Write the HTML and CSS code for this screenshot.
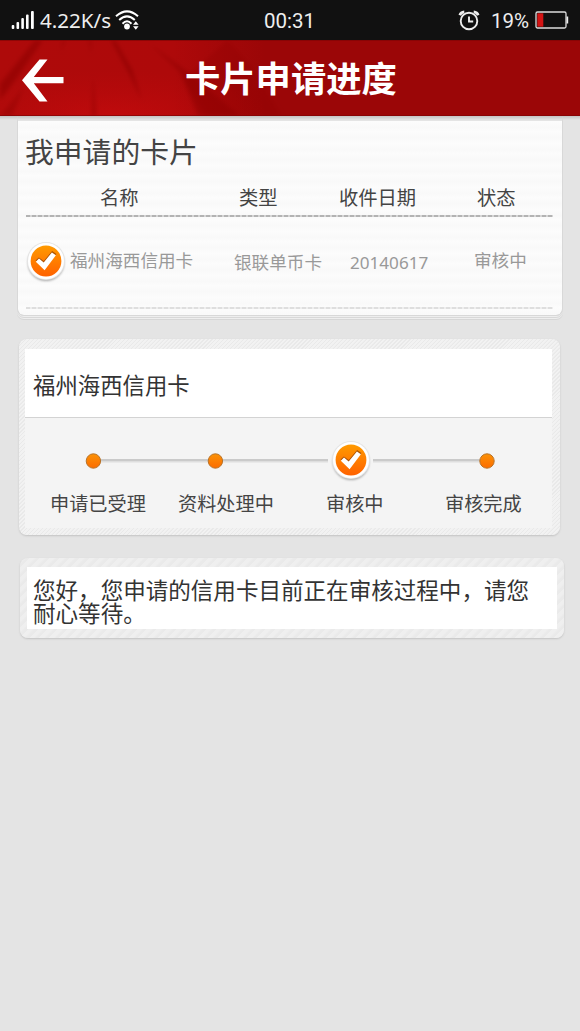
FILE: index.html
```html
<!DOCTYPE html>
<html lang="zh-CN">
<head>
<meta charset="utf-8">
<title>卡片申请进度</title>
<link rel="stylesheet" href="styles.css">
</head>
<body>
<svg class="defs" width="0" height="0" aria-hidden="true">
  <defs>
    <linearGradient id="orange" x1="0" y1="0" x2="0" y2="1"><stop offset="0" stop-color="#ff9a00"/><stop offset="1" stop-color="#ff6200"/></linearGradient>
    <linearGradient id="dot" x1="0" y1="0" x2="0" y2="1"><stop offset="0" stop-color="#fb9206"/><stop offset="1" stop-color="#fc6c00"/></linearGradient>
    <filter id="soft" x="-20%" y="-20%" width="140%" height="140%"><feGaussianBlur stdDeviation="1"/></filter>
    <filter id="fold" x="-40%" y="-20%" width="180%" height="140%"><feGaussianBlur stdDeviation="2"/></filter>
    <symbol id="check" viewBox="0 0 44 44">
      <circle cx="22" cy="23.8" r="18.3" fill="#777" opacity=".6" filter="url(#soft)"/>
      <circle cx="22" cy="22" r="19" fill="#e5e5e5"/>
      <circle cx="22" cy="22" r="18" fill="#fff"/>
      <circle cx="22" cy="22" r="15.4" fill="url(#orange)"/>
      <path d="M11.5 21.500l3.300-3.100 5 3.500 8.300-9.900 4.300 3-11.300 14z" fill="#873b00" opacity=".7"/>
      <path d="M11.800 22.800l3.200-3.200 4.700 4 8.200-10.200 4 2.900-11.300 15z" fill="#fff"/>
    </symbol>
  </defs>
</svg>
<div class="status">
  <svg class="signal" width="24" height="20" viewBox="0 0 24 20" fill="#fff"><rect x=".7" y="15" width="2.6" height="4" rx="1"/><rect x="5.500" y="12" width="2.6" height="7" rx="1"/><rect x="10.300" y="8" width="2.6" height="11" rx="1"/><rect x="15" y="4.500" width="2.6" height="14.500" rx="1"/><rect x="20" y="1" width="2.8" height="18" rx="1"/></svg>
  <span class="speed">4.22K/s</span>
  <svg class="wifi" width="26" height="20" viewBox="0 0 26 20" fill="none" stroke="#fff" stroke-width="2"><path d="M1 6.200Q12 -3.500 23 6.200M4.200 10Q12 2.700 19.800 10M7.500 13.700Q12 9 16.500 13.700"/><circle cx="12" cy="16.500" r="2.900" fill="#fff" stroke="none"/><path d="M18 14.800l2.800-3.500 2.800 3.500zM18 16.200l2.800 3.500 2.800-3.500z" fill="#fff" stroke="none"/></svg>
  <span class="clock">00:31</span>
  <svg class="alarm" width="22" height="21" viewBox="0 0 22 21" fill="none" stroke="#eee" stroke-width="1.900"><circle cx="11" cy="11" r="8.300"/><path d="M11 6.500v5h4.200"/><path d="M1.800 5.200Q2.800 2.200 6.300 1.900M20.200 5.200Q19.200 2.200 15.700 1.900" stroke-width="2.700"/></svg>
  <span class="percent">19%</span>
  <svg class="battery" width="34" height="20" viewBox="0 0 34 20"><rect x="1" y="2" width="30" height="16" rx="1.500" fill="#111" stroke="#ddd" stroke-width="1.300"/><rect x="31.500" y="6.500" width="1.700" height="7" fill="#eee"/><rect x="2.300" y="3.300" width="6" height="13.400" fill="#d41414"/></svg>
</div>
<header class="header">
  <svg class="folds" width="580" height="76" viewBox="0 0 580 76" aria-hidden="true">
    <defs>
      <linearGradient id="cloth" x1="0" y1="0" x2="1" y2="0"><stop offset="0" stop-color="#ae0a0a"/><stop offset=".65" stop-color="#ae090a"/><stop offset="1" stop-color="#9b0607"/></linearGradient>
      <radialGradient id="glow" cx=".42" cy="1" r=".6"><stop offset="0" stop-color="#cc0b0e" stop-opacity=".6"/><stop offset="1" stop-color="#c00a0c" stop-opacity="0"/></radialGradient>
    </defs>
    <rect width="580" height="76" fill="#9b0607"/>
    <rect width="265" height="76" fill="url(#cloth)"/>
    <rect width="265" height="76" fill="url(#glow)"/>
    <g fill="#8d0508" filter="url(#fold)">
      <path d="M35 0h8L14 42 0 60V44z" opacity=".6"/>
      <path d="M111 0h4l17 30 10 31-13-28z" opacity=".7"/>
      <path d="M150 4l38 28 52 44h-42l-18-44z" opacity=".5"/>
      <path d="M228 0l24 27 30 49H206l-22-37z" opacity=".3"/>
      <path d="M62 0h4l-5 12zM88 0h4l-1 14zM93 36l4 40h-6zM24 47l-12 29H0z" opacity=".4"/>
    </g>
    <path d="M0 .5h580M0 75.500h580" stroke="#7e0405" opacity=".65"/>
  </svg>
  <svg class="back" width="44" height="46" viewBox="0 0 44 46"><path d="M17.500 1.500h8L11.800 19H41.500v6.200H11.800L25.500 43.500h-8L0 22.300z" fill="#fff"/></svg>
  <h1 class="title">卡片申请进度</h1>
</header>
<main class="page">
  <section class="list">
    <h2 class="list-title">我申请的卡片</h2>
    <div class="columns labels"><span>名称</span><span>类型</span><span>收件日期</span><span>状态</span></div>
    <div class="columns record">
      <svg class="record-check" width="44" height="44"><use href="#check"/></svg>
      <span>福州海西信用卡</span><span class="lower">银联单币卡</span><span class="lower date">20140617</span><span>审核中</span>
    </div>
  </section>
  <section class="panel progress">
    <h3 class="card-name">福州海西信用卡</h3>
    <div class="steps">
      <svg class="track" width="528" height="44" viewBox="0 0 528 44">
        <path d="M68 22H303M348 22H462" stroke="#cacaca" stroke-width="2"/><path d="M68 23.800H303M348 23.800H462" stroke="#dedede" stroke-width="1.500"/>
        <g fill="url(#dot)" stroke="#b97328"><circle cx="68.400" cy="23" r="7.200"/><circle cx="190.400" cy="23" r="7.200"/><circle cx="462" cy="23" r="7.200"/></g>
        <use href="#check" x="304" y="0" width="44" height="44"/>
      </svg>
      <div class="step-labels"><span>申请已受理</span><span>资料处理中</span><span>审核中</span><span>审核完成</span></div>
    </div>
  </section>
  <section class="panel message"><p class="message-text">您好，您申请的信用卡目前正在审核过程中，请您耐心等待。</p></section>
</main>
</body>
</html>
```

FILE: styles.css
```css
* { box-sizing: border-box; }
body { margin: 0; min-height: 1031px; background: #e4e4e4; color: #333; font-family: "Noto Sans", "Noto Sans CJK SC", sans-serif; }
h1, h2, h3, p { margin: 0; font-weight: 400; }
svg { display: block; flex: none; }
.defs { position: absolute; }
.status { display: flex; align-items: center; height: 40px; padding-left: 11px; background: #111; color: #eee; font-size: 20.6px; line-height: 40px; white-space: nowrap; }
.speed { width: 75px; margin-left: 5px; }
.clock { width: 51px; margin-left: 123px; padding-top: 1px; font-family: Roboto, sans-serif; font-size: 20.5px; }
.alarm { margin-left: 143px; }
.percent { width: 39px; margin-left: 11px; padding-top: 1px; font-family: Roboto, sans-serif; font-size: 20.5px; }
.battery { margin-left: 5px; }
.header { position: relative; display: flex; height: 76px; }
.folds { position: absolute; inset: 0; z-index: -1; }
.back { margin: 18px 0 0 22px; }
.title { margin-left: 119px; color: #fff; font: 700 35.3px/74px "Noto Sans CJK SC", sans-serif; white-space: nowrap; }
.page { padding: 0 17px; background: linear-gradient(#c4c4c4, #e4e4e4 4px); }
.list { width: 546px; height: 200px; padding: 15px 9px 0 8px; background: repeating-linear-gradient(#fcfcfc 0, #f9f9f9 6px, #fcfcfc 11px); border: solid #d8d8d8; border-width: 5px 1px 1px; border-top-color: transparent; background-clip: padding-box; border-radius: 0 0 7px 7px; box-shadow: 0 1px #eee, 0 2px #d8d8d8, 0 3px #eee, 0 4px #d6d6d6; font-family: "Noto Sans CJK SC", sans-serif; }
.list-title { height: 34px; margin-left: -1px; color: #444; font-size: 28.8px; line-height: 30px; }
.columns { display: grid; grid-template-columns: 164px 116px 121px 127px; }
.labels { height: 47px; color: #444; font-size: 19.3px; line-height: 55px; background: repeating-linear-gradient(90deg, #b3b3b3 0 4px, #d5d5d5 4px 6px) bottom / 100% 2px no-repeat; }
.labels span:nth-child(1) { padding-left: 74px; }
.labels span:nth-child(2) { padding-left: 49px; }
.labels span:nth-child(3) { padding-left: 33px; }
.labels span:nth-child(4) { padding-left: 50px; }
.record { grid-template-columns: 44px 164px 116px 124px 80px; height: 92px; color: #999; font-size: 17.6px; line-height: 86px; background: repeating-linear-gradient(90deg, #dedede 0 4px, #eee 4px 6px) bottom / 100% 2px no-repeat; white-space: nowrap; }
.record-check { margin: 22px 0 0 -2px; }
.lower { padding-top: 2px; }
.date { padding-top: 3px; font-family: "Noto Sans", sans-serif; font-size: 17.1px; }
.panel { padding: 10px 8px 7px 6px; background: repeating-linear-gradient(135deg, #f2f2f2 0 1.5px, #e9e9e9 2px 2.8px); border-radius: 8px; box-shadow: 0 1px 2px #c2c2c2; font-family: "Noto Sans CJK SC", sans-serif; }
.progress { width: 541px; height: 196px; margin: 23px 0 0 2px; }
.card-name { height: 69px; padding-left: 8px; background: #fff; border-bottom: 1px solid #d3d3d3; font-size: 22.4px; line-height: 71px; }
.steps { height: 110px; padding-top: 20px; background: #f4f4f4; }
.step-labels { display: grid; grid-template-columns: 128px 148px 119px 108px; padding-left: 25px; color: #444; font-size: 19.2px; line-height: 43px; white-space: nowrap; }
.message { width: 544px; height: 80px; margin: 23px 0 0 3px; padding: 9px 7px 9px 7px; background: repeating-linear-gradient(135deg, #efefef 0 3px, #eaeaea 5px 7px); }
.message-text { height: 62px; padding: 11px 20px 0 6px; background: #fff; font-size: 22.55px; line-height: 22.5px; }
```
